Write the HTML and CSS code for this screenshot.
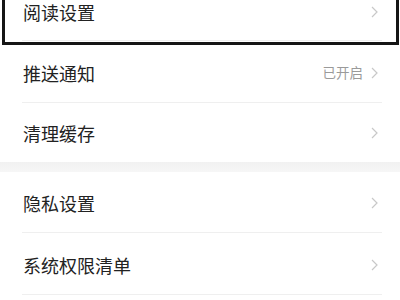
FILE: index.html
```html
<!DOCTYPE html>
<html lang="zh-CN">
<head>
<meta charset="utf-8">
<link rel="stylesheet" href="styles.css">
</head>
<body>
<div class="page">
  <div class="group">
    <div class="row row-first">
      <span class="label">阅读设置</span>
      <span class="right"><svg class="chev" viewBox="0 0 7 12"><path d="M1 1 L6 6 L1 11"/></svg></span>
    </div>
    <div class="row">
      <span class="label">推送通知</span>
      <span class="right"><span class="value">已开启</span><svg class="chev" viewBox="0 0 7 12"><path d="M1 1 L6 6 L1 11"/></svg></span>
    </div>
    <div class="row row-last">
      <span class="label">清理缓存</span>
      <span class="right"><svg class="chev" viewBox="0 0 7 12"><path d="M1 1 L6 6 L1 11"/></svg></span>
    </div>
  </div>
  <div class="band"></div>
  <div class="group">
    <div class="row">
      <span class="label">隐私设置</span>
      <span class="right"><svg class="chev" viewBox="0 0 7 12"><path d="M1 1 L6 6 L1 11"/></svg></span>
    </div>
    <div class="row">
      <span class="label">系统权限清单</span>
      <span class="right"><svg class="chev" viewBox="0 0 7 12"><path d="M1 1 L6 6 L1 11"/></svg></span>
    </div>
  </div>
  <div class="highlight"></div>
</div>
</body>
</html>
```

FILE: styles.css
```css
html, body {
  margin: 0;
  padding: 0;
  background: #ffffff;
  overflow: hidden;
}
body {
  width: 400px;
  height: 300px;
  font-family: "Noto Sans CJK SC", "Noto Sans", sans-serif;
}
.page {
  position: relative;
  width: 400px;
  height: 300px;
  overflow: hidden;
}
.row {
  height: 62px;
  display: flex;
  align-items: center;
  justify-content: space-between;
  padding: 0 22px 0 23px;
  box-sizing: border-box;
  position: relative;
}
.row::after {
  content: "";
  position: absolute;
  left: 22px;
  right: 18px;
  bottom: 1px;
  height: 1px;
  background: #efefef;
}
.row-first {
  height: 42px;
  padding-bottom: 18px;
}
.row-last {
  height: 58px;
}
.row-last::after {
  display: none;
}
.label {
  font-size: 18px;
  color: #222222;
  line-height: 1;
}
.right {
  display: flex;
  align-items: center;
  gap: 8px;
}
.value {
  font-size: 13.5px;
  color: #9a9a9a;
  line-height: 1;
}
.chev {
  width: 7px;
  height: 12px;
  fill: none;
  stroke: #c8c8c8;
  stroke-width: 1.2;
}
.band {
  height: 10px;
  background: linear-gradient(#f1f1f1, #f6f6f6);
}
.highlight {
  position: absolute;
  left: 2px;
  right: 1px;
  top: -10px;
  height: 55px;
  border: 3.5px solid #151515;
  box-sizing: border-box;
}
```
